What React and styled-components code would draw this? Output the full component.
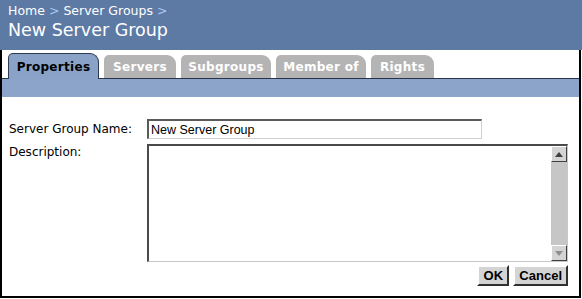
import React from "react";
import styled, { createGlobalStyle } from "styled-components";

const Global = createGlobalStyle`
  html, body {
    margin: 0;
    padding: 0;
    background: #ffffff;
  }
  body {
    font-family: "DejaVu Sans", Verdana, sans-serif;
  }
`;

const Page = styled.div`
  width: 582px;
  height: 299px;
  display: flex;
  flex-direction: column;
  box-sizing: border-box;
`;

const Header = styled.header`
  background: #5d7aa5;
  height: 50px;
  box-sizing: border-box;
  padding: 3px 8px 0;
  color: #ffffff;
`;

const Crumbs = styled.div`
  font-size: 12.5px;
  line-height: 16px;
  display: flex;
  gap: 4px;

  span.sep {
    color: #a9c8f5;
  }
`;

const Title = styled.h1`
  margin: 0;
  font-weight: normal;
  font-size: 17.5px;
  line-height: 22px;
`;

const Body = styled.div`
  flex: 1;
  display: flex;
  flex-direction: column;
  border: 2px solid #000000;
  border-top: none;
  margin-right: 1px;
  margin-bottom: 1px;
`;

const TabRow = styled.div`
  display: flex;
  align-items: flex-end;
  gap: 5px;
  padding: 3px 0 0 6px;
  border-bottom: 1px solid #27344c;
`;

const Tab = styled.div`
  width: ${(p) => p.$w}px;
  box-sizing: border-box;
  display: flex;
  align-items: center;
  justify-content: center;
  font-size: 12px;
  letter-spacing: 0.3px;
  font-weight: bold;
  border-radius: 5px 9px 0 0;
  color: ${(p) => (p.$active ? "#000000" : "#ffffff")};
  background: ${(p) => (p.$active ? "#8aa2c8" : "#b4b4b4")};
  border: ${(p) => (p.$active ? "1px solid #2e3b52" : "none")};
  border-bottom: none;
  margin-bottom: ${(p) => (p.$active ? "-1px" : "0")};
  height: ${(p) => (p.$active ? "26px" : "23px")};
`;

const Band = styled.div`
  height: 18px;
  background: #8ca4ca;
`;

const Form = styled.div`
  flex: 1;
  display: flex;
  flex-direction: column;
  padding: 22px 11px 0 7px;
  font-size: 12px;
  color: #000000;
`;

const Row = styled.div`
  display: grid;
  grid-template-columns: 138px 1fr;
  align-items: start;
  margin-bottom: 5px;
`;

const Label = styled.label`
  padding-top: ${(p) => p.$top || 3}px;
`;

const TextInput = styled.input`
  width: 335px;
  height: 20px;
  box-sizing: border-box;
  border: 1px solid;
  border-color: #5a5a5a #d0d0d0 #d0d0d0 #5a5a5a;
  border-top-width: 2px;
  border-left-width: 2px;
  padding: 0 2px;
  font-family: "Liberation Sans", Arial, sans-serif;
  font-size: 12.5px;
  outline: none;
`;

const AreaBox = styled.div`
  width: 421px;
  height: 118px;
  box-sizing: border-box;
  display: flex;
  border: 1px solid;
  border-color: #4a4a4a #c8c8c8 #c8c8c8 #4a4a4a;
  border-top-width: 2px;
  border-left-width: 2px;
`;

const Area = styled.textarea`
  flex: 1;
  border: none;
  resize: none;
  outline: none;
  overflow: hidden;
  font-family: "Liberation Sans", Arial, sans-serif;
  font-size: 12px;
`;

const Scroll = styled.div`
  width: 16px;
  display: flex;
  flex-direction: column;
  background: #c6c6c6;
`;

const ScrollBtn = styled.div`
  width: 16px;
  height: 16px;
  box-sizing: border-box;
  background: #d4d4d4;
  border: 1px solid;
  border-color: #ffffff #404040 #404040 #ffffff;
  display: flex;
  align-items: center;
  justify-content: center;
`;

const Track = styled.div`
  flex: 1;
`;

const Actions = styled.div`
  display: flex;
  justify-content: flex-end;
  gap: 4px;
  margin-top: -2px;
`;

const Button = styled.button`
  min-width: ${(p) => p.$w}px;
  height: 21px;
  box-sizing: border-box;
  padding: 0 4px;
  background: #d4d4d4;
  border: 2px solid;
  border-color: #ffffff #303030 #303030 #ffffff;
  font-family: "Liberation Sans", Arial, sans-serif;
  font-weight: bold;
  font-size: 13px;
  color: #000000;
`;

const tabs = [
  { name: "Properties", w: 91, active: true },
  { name: "Servers", w: 72 },
  { name: "Subgroups", w: 90 },
  { name: "Member of", w: 90 },
  { name: "Rights", w: 63 },
];

const Arrow = ({ up }) => (
  <svg width="8" height="5" viewBox="0 0 8 5">
    <polygon points={up ? "0,5 4,0 8,5" : "0,0 4,5 8,0"} fill={up ? "#404040" : "#909090"} />
  </svg>
);

const App = () => {
  return (
    <>
      <Global />
      <Page>
        <Header>
          <Crumbs>
            <span>Home</span>
            <span className="sep">&gt;</span>
            <span>Server Groups</span>
            <span className="sep">&gt;</span>
          </Crumbs>
          <Title>New Server Group</Title>
        </Header>
        <Body>
          <TabRow>
            {tabs.map((t) => (
              <Tab key={t.name} $active={t.active} $w={t.w}>
                {t.name}
              </Tab>
            ))}
          </TabRow>
          <Band />
          <Form>
            <Row>
              <Label>Server Group Name:</Label>
              <TextInput defaultValue="New Server Group" />
            </Row>
            <Row>
              <Label $top={1}>Description:</Label>
              <AreaBox>
                <Area />
                <Scroll>
                  <ScrollBtn>
                    <Arrow up />
                  </ScrollBtn>
                  <Track />
                  <ScrollBtn>
                    <Arrow />
                  </ScrollBtn>
                </Scroll>
              </AreaBox>
            </Row>
            <Actions>
              <Button $w={32}>OK</Button>
              <Button $w={51}>Cancel</Button>
            </Actions>
          </Form>
        </Body>
      </Page>
    </>
  );
};

export default App;
